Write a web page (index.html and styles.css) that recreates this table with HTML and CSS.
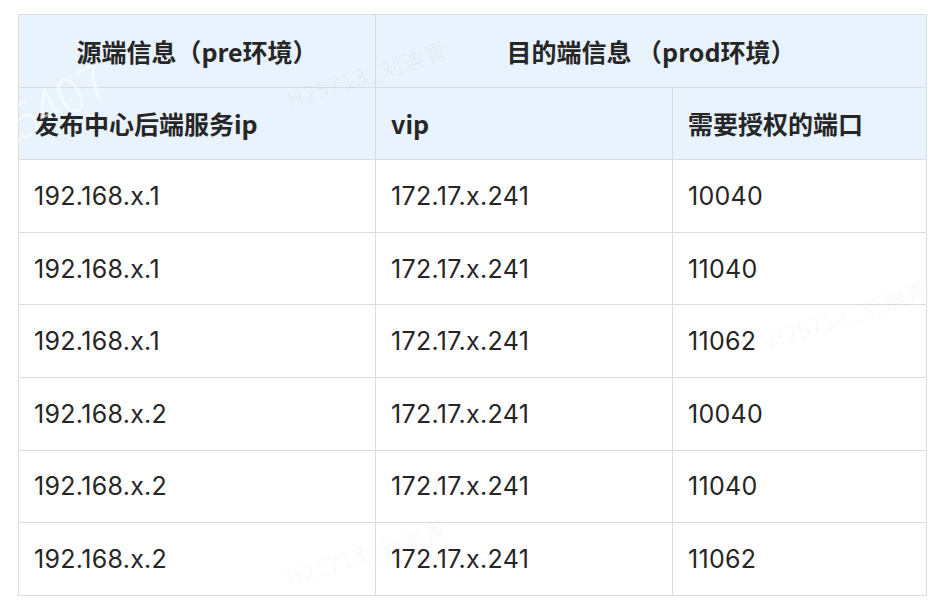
FILE: index.html
```html
<!DOCTYPE html>
<html lang="zh-CN">
<head>
<meta charset="utf-8">
<link rel="stylesheet" href="styles.css">
</head>
<body>
<div class="page">
  <table class="grid">
    <colgroup>
      <col class="c1"><col class="c2"><col class="c3">
    </colgroup>
    <thead>
      <tr>
        <th class="center">源端信息（pre环境）</th>
        <th class="center" colspan="2">目的端信息 （prod环境）</th>
      </tr>
      <tr>
        <th>发布中心后端服务ip</th>
        <th>vip</th>
        <th>需要授权的端口</th>
      </tr>
    </thead>
    <tbody>
      <tr><td>192.168.x.1</td><td>172.17.x.241</td><td>10040</td></tr>
      <tr><td>192.168.x.1</td><td>172.17.x.241</td><td>11040</td></tr>
      <tr><td>192.168.x.1</td><td>172.17.x.241</td><td>11062</td></tr>
      <tr><td>192.168.x.2</td><td>172.17.x.241</td><td>10040</td></tr>
      <tr><td>192.168.x.2</td><td>172.17.x.241</td><td>11040</td></tr>
      <tr><td>192.168.x.2</td><td>172.17.x.241</td><td>11062</td></tr>
    </tbody>
  </table>
  <span class="wm wm1">H25713_刘迪青</span>
  <span class="wm wm2">H25713_刘迪青</span>
  <span class="wm wm3">H25713_刘迪青</span>
  <span class="wm wm-big">A5407</span>
</div>
</body>
</html>
```
FILE: styles.css
```css
html, body {
  margin: 0;
  padding: 0;
  background: #ffffff;
}
.page {
  position: relative;
  width: 936px;
  height: 604px;
  overflow: hidden;
  padding: 14px 0 0 18px;
  box-sizing: border-box;
  font-family: "Inter", "Noto Sans CJK SC", sans-serif;
  color: #262626;
}
.grid {
  border-collapse: collapse;
  width: 908px;
  table-layout: fixed;
}
.c1 { width: 357px; }
.c2 { width: 297px; }
.c3 { width: 254px; }
.grid th, .grid td {
  border: 1px solid #dcdcdc;
  height: 72.6px;
  padding: 0 0 0 15px;
  text-align: left;
  vertical-align: middle;
  font-size: 25px;
  box-sizing: border-box;
}
.grid th {
  background: #e8f3fe;
  font-weight: 700;
  font-family: "Noto Sans CJK SC", sans-serif;
}
.grid th.center {
  text-align: center;
  padding: 0;
}
.grid td {
  font-weight: 400;
  letter-spacing: 0.3px;
}
.wm {
  position: absolute;
  font-family: "Noto Sans CJK SC", sans-serif;
  font-size: 22px;
  font-weight: 300;
  letter-spacing: 1.5px;
  color: rgba(0, 0, 0, 0.05);
  white-space: nowrap;
  transform: translate(-50%, -50%) rotate(-18deg);
  pointer-events: none;
}
.wm1 { left: 367px; top: 73px; }
.wm2 { left: 848px; top: 313px; }
.wm3 { left: 366px; top: 551px; }
.wm-big {
  left: 45px;
  top: 105px;
  font-size: 48px;
  letter-spacing: 0;
  color: rgba(255, 255, 255, 0.55);
  transform: translate(-50%, -50%) rotate(-28deg);
}
```
